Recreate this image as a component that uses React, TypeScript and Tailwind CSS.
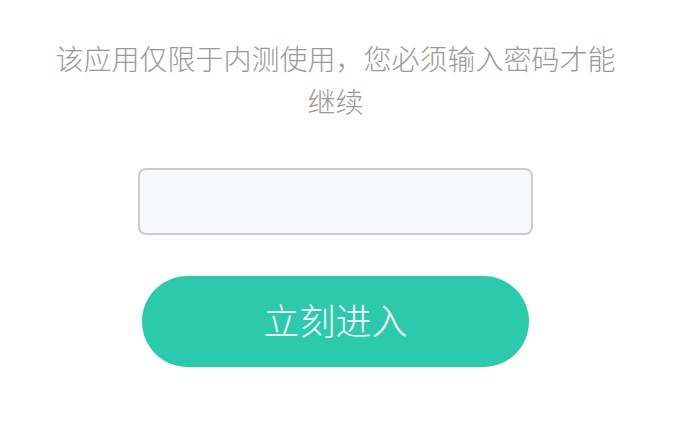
export default function App() {
  return (
    <div
      className="min-h-[426px] w-[679px] bg-white"
      style={{ fontFamily: '"Noto Sans CJK SC", "Noto Sans", sans-serif' }}
    >
      <div className="flex w-[671px] flex-col items-center pt-[37px]">
        <p className="w-[572px] text-center text-[28px] font-light leading-[43px] text-[#999999]">
          该应用仅限于内测使用，您必须输入密码才能继续
        </p>

        <input
          type="password"
          className="mt-[45px] h-[67px] w-[395px] rounded-[8px] border-2 border-[#cccccc] bg-[#f7f8fb] px-4 text-[22px] outline-none"
        />

        <button className="mt-[41px] flex h-[91px] w-[387px] items-center justify-center rounded-full bg-[#2ccaac] pb-[6px] text-[36px] font-light text-white">
          立刻进入
        </button>
      </div>
    </div>
  );
}
